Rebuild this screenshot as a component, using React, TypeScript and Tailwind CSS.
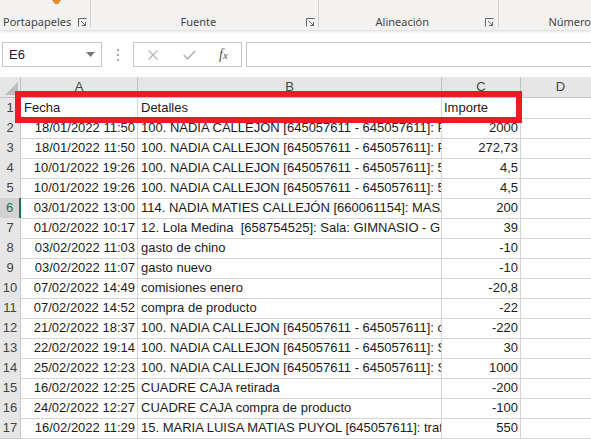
import type { FC } from 'react';

type Row = [string, string, string];

const rows: Row[] = [
  ['18/01/2022 11:50', '100. NADIA CALLEJON [645057611 - 645057611]: Pago', '2000'],
  ['18/01/2022 11:50', '100. NADIA CALLEJON [645057611 - 645057611]: Pago', '272,73'],
  ['10/01/2022 19:26', '100. NADIA CALLEJON [645057611 - 645057611]: 52 min', '4,5'],
  ['10/01/2022 19:26', '100. NADIA CALLEJON [645057611 - 645057611]: 52 min', '4,5'],
  ['03/01/2022 13:00', '114. NADIA MATIES CALLEJÓN [660061154]: MASAJE', '200'],
  ['01/02/2022 10:17', '12. Lola Medina  [658754525]: Sala: GIMNASIO - GRUPO', '39'],
  ['03/02/2022 11:03', 'gasto de chino', '-10'],
  ['03/02/2022 11:07', 'gasto nuevo', '-10'],
  ['07/02/2022 14:49', 'comisiones enero', '-20,8'],
  ['07/02/2022 14:52', 'compra de producto', '-22'],
  ['21/02/2022 18:37', '100. NADIA CALLEJON [645057611 - 645057611]: cobro', '-220'],
  ['22/02/2022 19:14', '100. NADIA CALLEJON [645057611 - 645057611]: Sala', '30'],
  ['25/02/2022 12:23', '100. NADIA CALLEJON [645057611 - 645057611]: SALA', '1000'],
  ['16/02/2022 12:25', 'CUADRE CAJA retirada', '-200'],
  ['24/02/2022 12:27', 'CUADRE CAJA compra de producto', '-100'],
  ['16/02/2022 11:29', '15. MARIA LUISA MATIAS PUYOL [645057611]: tratamiento', '550'],
];

const Launcher: FC = () => (
  <svg width="9" height="9" viewBox="0 0 9 9" className="shrink-0">
    <path d="M0.5 8.5V0.5H8.5" fill="none" stroke="#666" strokeWidth="1" />
    <path d="M3 3L7.5 7.5M7.5 4V7.5H4" fill="none" stroke="#666" strokeWidth="1" />
  </svg>
);

const Sep: FC = () => <div className="w-px h-[27px] bg-[#d2d0ce] shrink-0" />;

const Ribbon: FC = () => (
  <div className="relative z-10 flex h-[30px] bg-[#f3f2f1] shadow-[0_1px_3px_rgba(0,0,0,0.18)] text-[11px] text-[#444] font-[family-name:'Noto_Sans',sans-serif]">
    <div className="w-[91px] flex flex-col">
      <div className="flex-1 relative">
        <svg width="9" height="5" viewBox="0 0 9 5" className="ml-[52px]">
          <path d="M0 0H9L6 4H3Z" fill="#e8872b" />
        </svg>
      </div>
      <div className="h-[16px] flex items-center pl-[3px] pr-[3px]">
        <span className="flex-1">Portapapeles</span>
        <Launcher />
      </div>
    </div>
    <Sep />
    <div className="w-[231px] flex flex-col">
      <div className="flex-1" />
      <div className="h-[16px] flex items-center pr-[3px]">
        <span className="flex-1 text-center">Fuente</span>
        <Launcher />
      </div>
    </div>
    <Sep />
    <div className="w-[182px] flex flex-col">
      <div className="flex-1" />
      <div className="h-[16px] flex items-center pr-[4px]">
        <span className="flex-1 text-center">Alineación</span>
        <Launcher />
      </div>
    </div>
    <Sep />
    <div className="flex-1 flex flex-col">
      <div className="flex-1" />
      <div className="h-[16px] flex items-center pl-[49px] whitespace-nowrap">
        <span>Número</span>
      </div>
    </div>
  </div>
);

const FormulaBar: FC = () => (
  <div className="h-[47px] bg-white flex items-start pt-[12px] pl-[2px] font-[family-name:'Liberation_Sans',sans-serif]">
    <div className="w-[100px] h-[25px] border border-[#c6c6c6] bg-white flex items-center pl-[6px] pr-[6px] text-[13px] text-[#222]">
      <span className="flex-1">E6</span>
      <svg width="9" height="5" viewBox="0 0 9 5">
        <path d="M0 0H9L4.5 5Z" fill="#777" />
      </svg>
    </div>
    <div className="w-[31px] h-[25px] flex flex-col items-center justify-center gap-[3px]">
      <div className="w-[2px] h-[2px] bg-[#a6a6a6]" />
      <div className="w-[2px] h-[2px] bg-[#a6a6a6]" />
      <div className="w-[2px] h-[2px] bg-[#a6a6a6]" />
    </div>
    <div className="w-[109px] h-[25px] border border-[#c6c6c6] bg-white flex items-center">
      <svg width="10" height="10" viewBox="0 0 10 10" className="ml-[14px]">
        <path d="M0.5 0.5L9.5 9.5M9.5 0.5L0.5 9.5" stroke="#b4b4b4" strokeWidth="1.2" />
      </svg>
      <svg width="13" height="10" viewBox="0 0 13 10" className="ml-[25px]">
        <path d="M0.8 5L4.5 8.8L12.2 1" fill="none" stroke="#b4b4b4" strokeWidth="1.6" />
      </svg>
      <span className="ml-[23px] text-[14px] italic text-[#555] font-[family-name:'Liberation_Serif',serif]">
        f<span className="text-[11px]">x</span>
      </span>
    </div>
    <div className="flex-1 h-[25px] ml-[4px] -mr-[2px] border border-[#c6c6c6] bg-white" />
  </div>
);

const cols = 'grid grid-cols-[21px_117px_304px_79px_80px] w-max';

const Sheet: FC = () => (
  <div className="text-[13px] text-[#1b1b1b] font-[family-name:'Liberation_Sans',sans-serif]">
    <div className={`${cols} h-[21px] bg-[#e6e6e6] text-[#444]`}>
      <div className="border-r border-b border-[#c2c2c2] relative">
        <svg width="21" height="21" viewBox="0 0 21 21" className="absolute inset-0">
          <path d="M5 18H18V5Z" fill="#bdbdbd" />
        </svg>
      </div>
      {['A', 'B', 'C', 'D'].map((c) => (
        <div key={c} className="border-r border-b border-[#c2c2c2] flex items-center justify-center">
          {c}
        </div>
      ))}
    </div>
    <div className={`${cols} h-[20px]`}>
      <div className="bg-[#e6e6e6] text-[#444] border-r border-b border-[#c8c8c8] flex items-center justify-center">
        1
      </div>
      <div className="border-r border-b border-[#d4d4d4] flex items-center pl-[3px]">Fecha</div>
      <div className="border-r border-b border-[#d4d4d4] flex items-center pl-[3px]">Detalles</div>
      <div className="border-r border-b border-[#d4d4d4] flex items-center pl-[2px]">Importe</div>
      <div className="border-r border-b border-[#d4d4d4]" />
    </div>
    {rows.map(([date, detail, amount], i) => {
      const n = i + 2;
      const active = n === 6;
      return (
        <div key={n} className={`${cols} h-[20px]`}>
          <div
            className={
              active
                ? 'bg-[#d2d2d2] text-[#217346] border-r-2 border-r-[#217346] border-b border-b-[#c8c8c8] flex items-center justify-center'
                : 'bg-[#e6e6e6] text-[#444] border-r border-b border-[#c8c8c8] flex items-center justify-center'
            }
          >
            {n}
          </div>
          <div className="border-r border-b border-[#d4d4d4] flex items-center justify-end pr-[2px] whitespace-nowrap">
            {date}
          </div>
          <div className="border-r border-b border-[#d4d4d4] flex items-center pl-[3px] whitespace-pre overflow-hidden">
            {detail}
          </div>
          <div className="border-r border-b border-[#d4d4d4] flex items-center justify-end pr-[2px]">
            {amount}
          </div>
          <div className="border-r border-b border-[#d4d4d4]" />
        </div>
      );
    })}
  </div>
);

export default function App() {
  return (
    <div className="relative w-[591px] h-[439px] overflow-hidden bg-white">
      <Ribbon />
      <FormulaBar />
      <Sheet />
      <div className="absolute left-[15px] top-[91px] w-[507px] h-[32px] border-[6px] border-[#ec1c24] pointer-events-none" />
    </div>
  );
}
